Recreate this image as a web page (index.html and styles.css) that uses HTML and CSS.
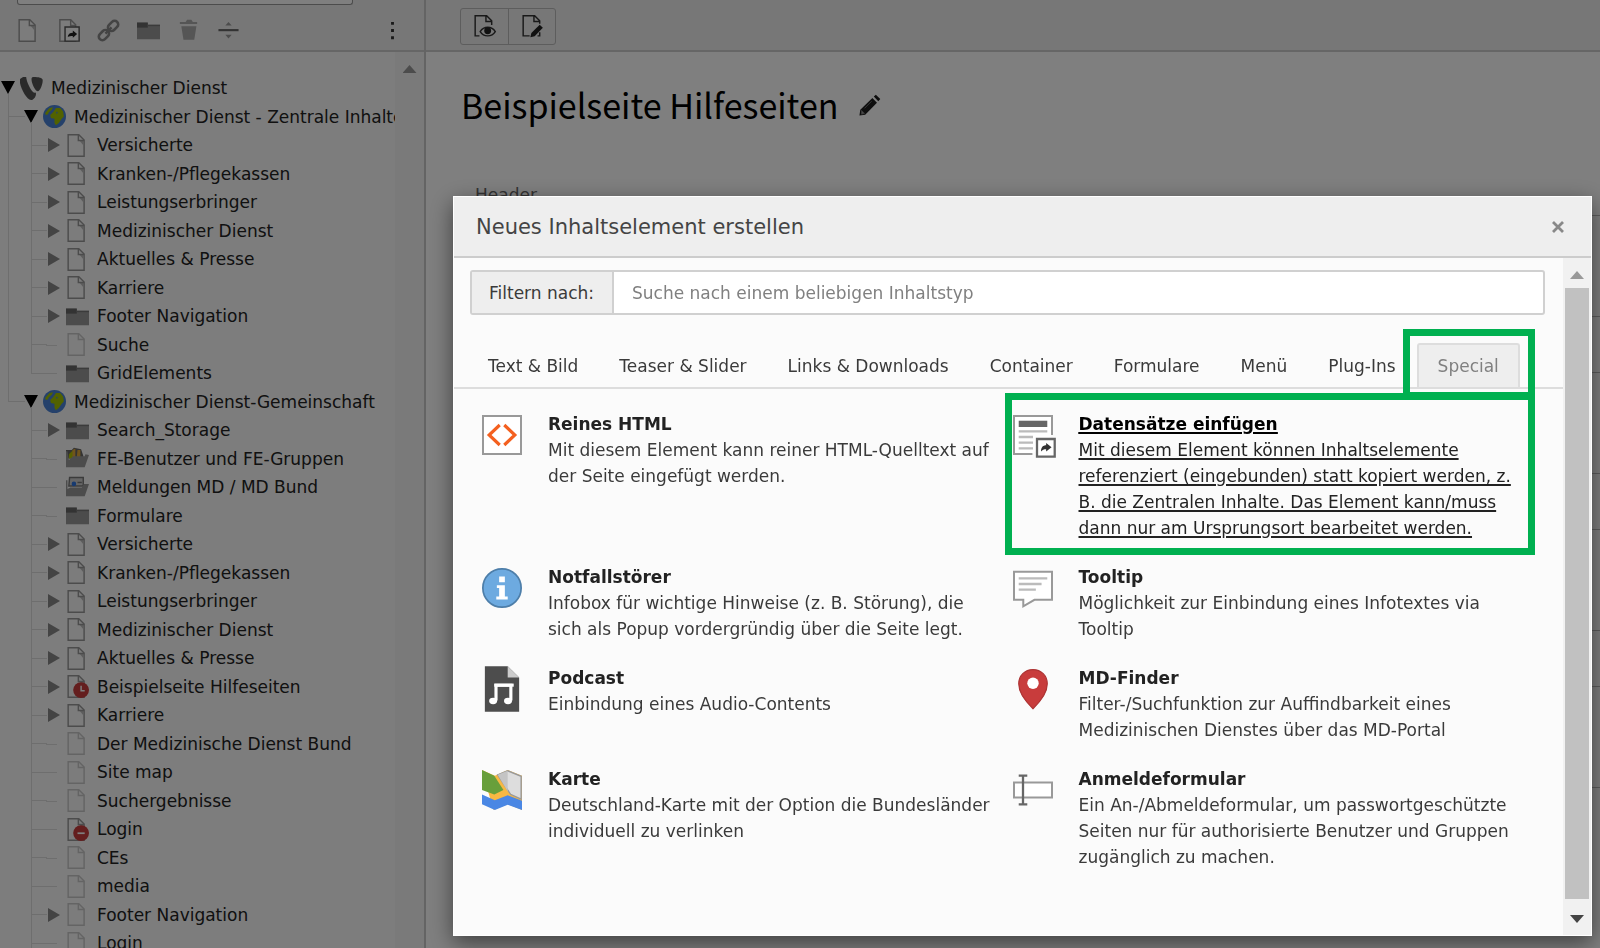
FILE: index.html
```html
<!DOCTYPE html>
<html lang="de">
<head>
<meta charset="utf-8">
<title>Neues Inhaltselement erstellen</title>
<link rel="stylesheet" href="styles.css">
</head>
<body>
<svg class="sprite" aria-hidden="true">
  <symbol id="page" viewBox="0 0 16 16"><path d="M1.500.5h7.400L12.600 4.200v11.300H1.500z" fill="#f8f8f8" stroke="#999"/><path d="M8.600.5v4h4v4L8.500 3.500z" fill="#bbb"/><path d="M8.600.5v4h4" fill="none" stroke="#999"/></symbol>
  <symbol id="page-light" viewBox="0 0 16 16"><path d="M1.500.5h7.400L12.600 4.200v11.300H1.500z" fill="#f8f8f8" stroke="#c8c8c8"/><path d="M8.600.5v4h4" fill="none" stroke="#c8c8c8"/></symbol>
  <symbol id="folder" viewBox="0 0 16 16"><path d="M0 2.500h7.500v1.500H16v10H0z" fill="#999"/><path d="M0 2.500h7.500V6H0z" fill="#666"/><path d="M7 4h9v1H7z" fill="#777"/></symbol>
  <symbol id="globe" viewBox="0 0 16 16"><circle cx="8" cy="8" r="8" fill="#4a83d6"/><path d="M1.500 5.500 4.500 2 7 1.500 6 3.500 4 5 3.500 6.500 2 7zM9 2h3l2 2.500.5 3.500-1.500 1.500-2 3-2 1.500-1-1.500V9.500L5.500 9 5 7l2-2z" fill="#a5c400"/><path d="m9.500 4.500 1 1-1.500.5z" fill="#4a83d6"/></symbol>
  <symbol id="typo3" viewBox="0 0 16 16"><path d="M11 10.800c-.3.100-.5.100-.8.100-2.400 0-5.900-8.300-5.900-11 0-1 .200-1.300.6-1.600C2 .100.500.900 0 1.500c-.1.200-.2.500-.2.900C-.2 6.700 4.400 16 7.700 16c1.500 0 4-2.500 3.300-5.200M9.700 0c3 0 6.100.500 6.100 2.200 0 3.500-2.200 7.700-3.300 7.700-2 0-4.500-5.600-4.500-8.400C8 .300 8.500 0 9.700 0" fill="#555"/></symbol>
  <symbol id="users" viewBox="0 0 16 16"><path d="M0 2h4l1.500-1.500 5 1L12 6v2H0z" fill="#666"/><path d="m2 5 3-3v6H2z" fill="#b2c400"/><path d="M4.500 2 6.500 1v6h-2zm3.500 0h2v5H7.500z" fill="#e0a83a"/><path d="M0 3h1l1 6 3-2.500h8l.5-1.500L16 5.500l-3 8.500H0z" fill="#999"/></symbol>
  <symbol id="news" viewBox="0 0 16 16"><path d="M2.500 1h9.500v6h-10z" fill="#ccc" stroke="#777"/><circle cx="5.500" cy="5.500" r="1.600" fill="#2f74e0"/><path d="M8 4h3v1H8z" fill="#777"/><path d="M0 3h1v6l2-1h8l1.500-2.500H16L13 14H0z" fill="#999"/></symbol>
  <symbol id="page-clock" viewBox="0 0 16 16"><use href="#page"/><circle cx="10.500" cy="10.500" r="5.500" fill="#c83c3c"/><path d="M10.500 7.500v3.500h2.500" fill="none" stroke="#fff"/></symbol>
  <symbol id="page-stop" viewBox="0 0 16 16"><use href="#page"/><circle cx="10.500" cy="10.500" r="5.500" fill="#c83c3c"/><path d="M8 10h5v1.200H8z" fill="#fff"/></symbol>
</svg>

<div class="app">
  <aside class="sidebar">
    <div class="tree-head">
      <input class="tree-search" type="text" aria-label="Seitenbaum durchsuchen">
      <div class="tree-tools">
        <button type="button" aria-label="Neue Seite"><svg class="ico"><use href="#page"/></svg></button>
        <button type="button" aria-label="Verweis"><svg class="ico" viewBox="0 0 16 16"><path d="M2 .5h7.500L13 4v11.500H2z" fill="#f8f8f8" stroke="#999"/><path d="M9.500.5v4H13" fill="none" stroke="#999"/><path d="M5.600 5.600h9.800v9.800H5.600z" fill="#fff" stroke="#555"/><path d="M7.500 12.500c0-2 1.500-3 3.500-3V8l3 2.500-3 2.500v-1.200c-1.500 0-2.500 0-3.500.7" fill="#222"/></svg></button>
        <button type="button" aria-label="Link"><svg class="ico" viewBox="0 0 16 16"><g transform="rotate(-45 8 8)" fill="none" stroke="#888" stroke-width="1.800"><rect x="-.5" y="5.500" width="8" height="5" rx="2.500"/><rect x="8.500" y="5.500" width="8" height="5" rx="2.500"/><path d="M5 8h6"/></g></svg></button>
        <button type="button" aria-label="Ordner"><svg class="ico"><use href="#folder"/></svg></button>
        <button type="button" aria-label="Papierkorb"><svg class="ico" viewBox="0 0 16 16"><path d="M2 3V2h4l1-1.500h3L11 2h3v1.500H2zM3 5h10.500L12 14.500H4.500z" fill="#aaa"/></svg></button>
        <button type="button" aria-label="Trenner"><svg class="ico" viewBox="0 0 16 16"><path d="M1 7h14v1.500H1z" fill="#666"/><path d="m8 2 2.200 2.500H5.800zM8 13.500l2.200-2.500H5.800z" fill="#999"/></svg></button>
        <button class="more" type="button" aria-label="Mehr"><svg class="ico" viewBox="0 0 16 16"><path d="M7 2h2v2H7zM7 7h2v2H7zM7 12h2v2H7z" fill="#333"/></svg></button>
      </div>
    </div>
    <div class="tree-wrap">
      <ul class="tree">
        <li class="l0"><i class="tg open"></i><svg class="ico"><use href="#typo3"/></svg><span>Medizinischer Dienst</span></li>
        <li class="l1"><i class="tg open"></i><svg class="ico"><use href="#globe"/></svg><span>Medizinischer Dienst - Zentrale Inhalte</span></li>
        <li class="l2 trunk"><i class="tg shut"></i><svg class="ico"><use href="#page"/></svg><span>Versicherte</span></li>
        <li class="l2 trunk"><i class="tg shut"></i><svg class="ico"><use href="#page"/></svg><span>Kranken-/Pflegekassen</span></li>
        <li class="l2 trunk"><i class="tg shut"></i><svg class="ico"><use href="#page"/></svg><span>Leistungserbringer</span></li>
        <li class="l2 trunk"><i class="tg shut"></i><svg class="ico"><use href="#page"/></svg><span>Medizinischer Dienst</span></li>
        <li class="l2 trunk"><i class="tg shut"></i><svg class="ico"><use href="#page"/></svg><span>Aktuelles &amp; Presse</span></li>
        <li class="l2 trunk"><i class="tg shut"></i><svg class="ico"><use href="#page"/></svg><span>Karriere</span></li>
        <li class="l2 trunk"><i class="tg shut"></i><svg class="ico"><use href="#folder"/></svg><span>Footer Navigation</span></li>
        <li class="l2 trunk"><i class="tg"></i><svg class="ico"><use href="#page-light"/></svg><span>Suche</span></li>
        <li class="l2 trunk last"><i class="tg"></i><svg class="ico"><use href="#folder"/></svg><span>GridElements</span></li>
        <li class="l1 last"><i class="tg open"></i><svg class="ico"><use href="#globe"/></svg><span>Medizinischer Dienst-Gemeinschaft</span></li>
        <li class="l2"><i class="tg shut"></i><svg class="ico"><use href="#folder"/></svg><span>Search_Storage</span></li>
        <li class="l2"><i class="tg"></i><svg class="ico"><use href="#users"/></svg><span>FE-Benutzer und FE-Gruppen</span></li>
        <li class="l2"><i class="tg"></i><svg class="ico"><use href="#news"/></svg><span>Meldungen MD / MD Bund</span></li>
        <li class="l2"><i class="tg"></i><svg class="ico"><use href="#folder"/></svg><span>Formulare</span></li>
        <li class="l2"><i class="tg shut"></i><svg class="ico"><use href="#page"/></svg><span>Versicherte</span></li>
        <li class="l2"><i class="tg shut"></i><svg class="ico"><use href="#page"/></svg><span>Kranken-/Pflegekassen</span></li>
        <li class="l2"><i class="tg shut"></i><svg class="ico"><use href="#page"/></svg><span>Leistungserbringer</span></li>
        <li class="l2"><i class="tg shut"></i><svg class="ico"><use href="#page"/></svg><span>Medizinischer Dienst</span></li>
        <li class="l2"><i class="tg shut"></i><svg class="ico"><use href="#page"/></svg><span>Aktuelles &amp; Presse</span></li>
        <li class="l2"><i class="tg shut"></i><svg class="ico"><use href="#page-clock"/></svg><span>Beispielseite Hilfeseiten</span></li>
        <li class="l2"><i class="tg shut"></i><svg class="ico"><use href="#page"/></svg><span>Karriere</span></li>
        <li class="l2"><i class="tg"></i><svg class="ico"><use href="#page-light"/></svg><span>Der Medizinische Dienst Bund</span></li>
        <li class="l2"><i class="tg"></i><svg class="ico"><use href="#page-light"/></svg><span>Site map</span></li>
        <li class="l2"><i class="tg"></i><svg class="ico"><use href="#page-light"/></svg><span>Suchergebnisse</span></li>
        <li class="l2"><i class="tg"></i><svg class="ico"><use href="#page-stop"/></svg><span>Login</span></li>
        <li class="l2"><i class="tg"></i><svg class="ico"><use href="#page-light"/></svg><span>CEs</span></li>
        <li class="l2"><i class="tg"></i><svg class="ico"><use href="#page-light"/></svg><span>media</span></li>
        <li class="l2"><i class="tg shut"></i><svg class="ico"><use href="#page-light"/></svg><span>Footer Navigation</span></li>
        <li class="l2"><i class="tg"></i><svg class="ico"><use href="#page-light"/></svg><span>Login</span></li>
      </ul>
      <div class="tree-scroll"><i class="arrow-up"></i></div>
    </div>
  </aside>

  <main class="content">
    <div class="docheader">
      <div class="btn-group">
        <button type="button" aria-label="Ansehen"><svg class="ico" viewBox="0 0 16 16"><path d="M4.500 14.500h-3V.5h8L13 4v3M9 .5v4h4" fill="none" stroke="#333"/><path d="M5 11.500c2.500-4 8-4 10.500 0-2.500 4-8 4-10.500 0z" fill="#eee" stroke="#333"/><circle cx="10.200" cy="11" r="2.400" fill="#222"/></svg></button>
        <button type="button" aria-label="Seiteneigenschaften bearbeiten"><svg class="ico" viewBox="0 0 16 16"><path d="M6 14.500H1.500V.5h8L13 4v2M9 .5v4h4M13 12v2.500h-1.500" fill="none" stroke="#333"/><path d="m6.500 15.500.7-3L13 6.700l2.200 2.200L9.500 14.700z" fill="#222"/></svg></button>
      </div>
    </div>
    <div class="page-body">
      <h1>Beispielseite Hilfeseiten <button type="button" aria-label="Titel bearbeiten"><svg class="ico" viewBox="0 0 16 16"><path d="m1 15 .6-4L10 2.800 13.200 6 5 14.400zM11 1.800 12.400.5l3.100 3-1.400 1.500z" fill="#1c1c1c"/><path d="m2.500 11.500 2 2-2 .5zM4.500 10 9.500 5" fill="#999" stroke="#777" stroke-width=".6"/></svg></button></h1>
      <section class="column">
        <h2>Header</h2>
        <div class="ce"></div><div class="ce"></div><div class="ce"></div><div class="ce"></div>
      </section>
    </div>
  </main>
</div>

<div class="backdrop">
  <div class="modal" role="dialog" aria-labelledby="modal-title">
    <header class="modal-head">
      <h3 id="modal-title">Neues Inhaltselement erstellen</h3>
      <button class="close" type="button" aria-label="Schließen"><svg viewBox="0 0 12 12"><path d="m1 1 10 10M11 1 1 11" stroke="#888" stroke-width="2.800"/></svg></button>
    </header>
    <div class="modal-main">
      <div class="modal-body">
        <div class="filter">
          <label for="filter">Filtern nach:</label>
          <input id="filter" type="text" placeholder="Suche nach einem beliebigen Inhaltstyp">
        </div>
        <nav class="tabs">
          <a href="#">Text &amp; Bild</a><a href="#">Teaser &amp; Slider</a><a href="#">Links &amp; Downloads</a><a href="#">Container</a><a href="#">Formulare</a><a href="#">Menü</a><a href="#">Plug-Ins</a><a href="#" class="active">Special</a>
        </nav>
        <div class="items">
          <a class="item" href="#">
            <svg viewBox="0 0 14 14"><path d="M.35.350h13.300v13.300H.350z" fill="#fff" stroke="#999" stroke-width=".7"/><path d="M6.200 3.500 2.500 7l3.700 3.500M7.800 3.500 11.500 7l-3.700 3.500" fill="none" stroke="#f4601f" stroke-width="1.100"/></svg>
            <span><strong>Reines HTML</strong>Mit diesem Element kann reiner HTML-Quelltext auf der Seite eingefügt werden.</span>
          </a>
          <a class="item marked" href="#">
            <svg viewBox="0 0 14 14"><path d="M6.800 13.650H.350V.350h13.300V7" fill="#fff" stroke="#999" stroke-width=".7"/><path d="M2 2h10v2.200H2z" fill="#666"/><path d="M2 5.300h10v.8H2zM2 7.300h5v.8H2zM2 9.300h5v.8H2zM2 11.300h5v.8H2z" fill="#bbb"/><path d="M8.400 8.400h6.200v6.200H8.400z" fill="#fff" stroke="#666" stroke-width=".8"/><path d="M9.800 12.800c0-1.500.7-2.200 1.800-2.200v-.8l1.900 1.500-1.900 1.500V12c-.8 0-1.300.2-1.800.8" fill="#333"/></svg>
            <span><strong>Datensätze einfügen</strong>Mit diesem Element können Inhaltselemente referenziert (eingebunden) statt kopiert werden, z. B. die Zentralen Inhalte. Das Element kann/muss dann nur am Ursprungsort bearbeitet werden.</span>
          </a>
          <a class="item" href="#">
            <svg viewBox="0 0 14 14"><circle cx="7" cy="7" r="6.700" fill="#6daae0" stroke="#4d7ea9" stroke-width=".6"/><path d="M6 3h2v2H6zM5.200 6H8v4h1v1H5v-1h1V7h-.8z" fill="#fff"/></svg>
            <span><strong>Notfallstörer</strong>Infobox für wichtige Hinweise (z. B. Störung), die sich als Popup vordergründig über die Seite legt.</span>
          </a>
          <a class="item" href="#">
            <svg viewBox="0 0 14 14"><path d="M.350 1.350h13.300v9.800H7.500L3.600 13.400v-2.250H.350z" fill="#fff" stroke="#999" stroke-width=".7"/><path d="M2 3.200h10V4H2zM2 5.200h8V6H2zM2 7.200h6V8H2z" fill="#bbb"/></svg>
            <span><strong>Tooltip</strong>Möglichkeit zur Einbindung eines Infotextes via Tooltip</span>
          </a>
          <a class="item" href="#">
            <svg class="tall" viewBox="0 0 14 16"><path d="M1 0h8l4 4v12H1z" fill="#4d4d4d"/><path d="M9 0l4 4H9z" fill="#ccc"/><path d="M4.900 12V6.700h5.200V12" fill="none" stroke="#fff" stroke-width="1.100"/><path d="M4.300 6.100h6.800v1.100H4.300z" fill="#fff"/><ellipse cx="3.900" cy="12.200" rx="1.400" ry="1.100" fill="#fff"/><ellipse cx="9.100" cy="12.200" rx="1.400" ry="1.100" fill="#fff"/></svg>
            <span><strong>Podcast</strong>Einbindung eines Audio-Contents</span>
          </a>
          <a class="item" href="#">
            <svg viewBox="0 0 14 14"><path d="M7 .2c2.900 0 5 2.200 5 5 0 3.300-2.500 6.300-5 8.700C4.500 11.500 2 8.500 2 5.200c0-2.800 2.100-5 5-5z" fill="#c83c3c" stroke="#ad3434" stroke-width=".4"/><circle cx="7" cy="5" r="2" fill="#fff"/></svg>
            <span><strong>MD-Finder</strong>Filter-/Suchfunktion zur Auffindbarkeit eines Medizinischen Dienstes über das MD-Portal</span>
          </a>
          <a class="item" href="#">
            <svg viewBox="0 0 14 14"><path d="m0 0 4.500 2L9 0l5 2v12l-5-2-5 2z" fill="#f7b843"/><path d="M5.500 1.700 9 .3l4.700 1.900v8L10 8.500z" fill="#ddd" stroke="#999" stroke-width=".5"/><path d="M9 .3v7.200L5.500 1.700z" fill="#c4c4c4"/><path d="m4.500 2 4.500 5.500v2L4.500 11z" fill="#f7b843"/><path d="m0 0 4.300 2L7.500 7 4.300 8.600 0 7z" fill="#689f3b"/><path d="m0 8.600 4.500 2L9 8.800l5 2V14l-5-1.800L4.500 14 0 12z" fill="#4a87e4"/></svg>
            <span><strong>Karte</strong>Deutschland-Karte mit der Option die Bundesländer individuell zu verlinken</span>
          </a>
          <a class="item" href="#">
            <svg viewBox="0 0 14 14"><path d="M.350 4.350h13.300v5.300H.350z" fill="#fff" stroke="#999" stroke-width=".7"/><path d="M2 2h3M2 12h3M3.500 2v10" fill="none" stroke="#666" stroke-width=".8"/></svg>
            <span><strong>Anmeldeformular</strong>Ein An-/Abmeldeformular, um passwortgeschützte Seiten nur für authorisierte Benutzer und Gruppen zugänglich zu machen.</span>
          </a>
        </div>
      </div>
      <div class="modal-scroll"><i class="arrow-up"></i><i class="thumb"></i><i class="arrow-down"></i></div>
    </div>
  </div>
</div>
</body>
</html>
```
FILE: styles.css
```css
* { box-sizing: border-box; }
html, body { height: 100%; }
body {
  margin: 0;
  overflow: hidden;
  background: #fff;
  color: #3a3a3a;
  font: 17px/26px "DejaVu Sans", sans-serif;
}
button { padding: 0; border: 0; background: none; font: inherit; }
h1, h2, h3, ul { margin: 0; padding: 0; font-weight: 400; }
a { color: inherit; text-decoration: none; }
.sprite { position: absolute; width: 0; height: 0; }
.ico { flex: none; display: block; width: 23px; height: 23px; overflow: visible; }

.app { display: flex; height: 100%; }

/* page tree */
.sidebar { flex: 0 0 426px; min-width: 0; display: flex; flex-direction: column; border-right: 2px solid #c8c8c8; background: #fafafa; }
.tree-head { flex: none; height: 52px; border-bottom: 2px solid #ccc; background: #eee; }
.tree-search { display: block; width: 336px; height: 5px; margin-left: 17px; border: 1px solid #999; border-top: 0; border-radius: 0 0 3px 3px; background: #fff; }
.tree-tools { display: flex; gap: 17px; padding: 14px 20px 0 17px; }
.tree-tools .more { margin-left: auto; }
.tree-wrap { flex: 1; min-height: 0; display: flex; }
.tree { flex: 1; min-width: 0; overflow: hidden; list-style: none; padding-top: 22px; color: #222; }
.tree li { position: relative; display: flex; align-items: center; height: 28px; white-space: nowrap; }
.tree li:nth-child(even) { height: 29px; }
.tree span { margin-left: 8px; }
.tree .l1 { padding-left: 23px; }
.tree .l2 { padding-left: 46px; }
.tg { position: relative; flex: none; align-self: stretch; width: 20px; }
.tg::before { content: ""; position: absolute; top: 50%; left: 0; margin-top: -7px; }
.open::before { left: 1px; border: 7px solid transparent; border-top: 13px solid #000; border-bottom: 0; }
.shut::before { left: 2px; border: 7px solid transparent; border-left: 12px solid #888; border-right: 0; }
.l2 .tg:not(.shut)::before { margin-top: 0; width: 11px; height: 1px; background: #dcdcdc; }
.open::after { content: ""; position: absolute; left: 8px; top: 70%; bottom: 0; width: 1px; background: #dcdcdc; }
.tree li::before { content: ""; position: absolute; }
.tree .l1::before { left: 8px; top: 0; bottom: 0; width: 17px; background: linear-gradient(#dcdcdc, #dcdcdc) 0 0 / 1px 100% no-repeat, linear-gradient(#dcdcdc, #dcdcdc) 0 50% / 100% 1px no-repeat; }
.tree .l2::before { left: 31px; top: 0; bottom: 0; width: 16px; background: linear-gradient(#dcdcdc, #dcdcdc) 0 0 / 1px 100% no-repeat, linear-gradient(#dcdcdc, #dcdcdc) 0 50% / 100% 1px no-repeat; }
.tree .last::before { background-size: 1px 50%, 100% 1px; }
.tree .trunk::after { content: ""; position: absolute; left: 8px; top: 0; bottom: 0; width: 1px; background: #dcdcdc; }
.tree-scroll { flex: 0 0 29px; display: flex; justify-content: center; padding-top: 13px; background: #f5f5f5; }
.arrow-up, .arrow-down { flex: none; width: 14px; height: 8px; background: #999; clip-path: polygon(50% 0, 100% 100%, 0 100%); }
.arrow-down { background: #444; clip-path: polygon(0 0, 100% 0, 50% 100%); }

/* module content */
.content { flex: 1; min-width: 0; }
.docheader { height: 52px; padding: 8px 34px; border-bottom: 2px solid #ccc; background: #eee; }
.btn-group { display: inline-flex; height: 37px; border: 1px solid #bbb; border-radius: 3px; }
.btn-group button { display: flex; align-items: center; justify-content: center; width: 47px; }
.btn-group button + button { border-left: 1px solid #bbb; }
.page-body { padding: 29px 0 0 35px; }
h1 { display: flex; align-items: center; gap: 20px; color: #000; font: 34px/48px "Noto Sans CJK SC", sans-serif; }
.column { padding: 54px 0 0 14px; }
h2 { padding-bottom: 8px; font-size: 17px; line-height: 24px; color: #666; }
.ce { height: 102px; margin-bottom: 55px; border: 1px solid #bbb; border-right: 0; }

/* dialog */
.backdrop { position: fixed; inset: 0; display: flex; padding: 196px 8px 12px 453px; background: rgba(0, 0, 0, .5); }
.modal { flex: 1; min-width: 0; display: flex; flex-direction: column; border: 1px solid #fff; background: #fbfbfb; box-shadow: 0 7px 21px rgba(0, 0, 0, .5); }
.modal-head { display: flex; align-items: center; justify-content: space-between; height: 61px; padding: 0 27px 0 22px; border-bottom: 2px solid #ccc; background: #eee; }
h3 { font-size: 21px; line-height: 32px; color: #444; }
.close svg { display: block; width: 12px; height: 12px; }
.modal-main { flex: 1; min-height: 0; display: flex; }
.modal-body { flex: 1; min-width: 0; padding: 12px 18px 12px 16px; }
.filter { display: flex; height: 45px; border: 2px solid #d0d0d0; border-radius: 3px; background: #fff; }
.filter label { display: flex; align-items: center; padding: 0 18px 0 17px; border-right: 2px solid #d0d0d0; background: #eee; }
.filter input { flex: 1; min-width: 0; padding: 0 18px; border: 0; background: none; font: inherit; }
.filter input::placeholder { color: #808080; opacity: 1; }
.tabs { display: flex; gap: 1px; margin: 28px -18px 0 -16px; padding-left: 14px; border-bottom: 2px solid #ddd; }
.tabs a { height: 44px; padding: 0 19px; border: 1px solid transparent; line-height: 44px; white-space: nowrap; }
.tabs .active { position: relative; border: 2px solid #ddd; border-bottom: 0; border-radius: 3px 3px 0 0; background: #eee; color: #808080; line-height: 42px; }
.tabs .active::after { content: ""; position: absolute; inset: -16px -17px -12px -16px; border: 7px solid #00b050; }
.items { display: grid; grid-template-columns: 1fr 1fr; row-gap: 23px; padding: 22px 2px 0 12px; }
.item { position: relative; display: flex; gap: 26px; padding-right: 16px; }
.item svg { flex: none; width: 40px; height: 40px; margin-top: 4px; overflow: visible; }
.item .tall { height: 46px; margin-top: 1px; }
.item strong { display: block; color: #222; }
.marked span { color: #222; text-decoration: underline; text-decoration-thickness: 2px; text-underline-offset: 2px; }
.marked strong { color: #000; text-decoration: underline; text-decoration-thickness: 2px; }
.marked::after { content: ""; position: absolute; inset: -18px 8px -14px -8px; border: 7px solid #00b050; }
.modal-scroll { flex: 0 0 28px; display: flex; flex-direction: column; align-items: center; padding: 13px 0 12px; background: #f1f1f1; }
.thumb { flex: 1; width: 24px; margin: 9px 0 16px; background: #c1c1c1; }
```
